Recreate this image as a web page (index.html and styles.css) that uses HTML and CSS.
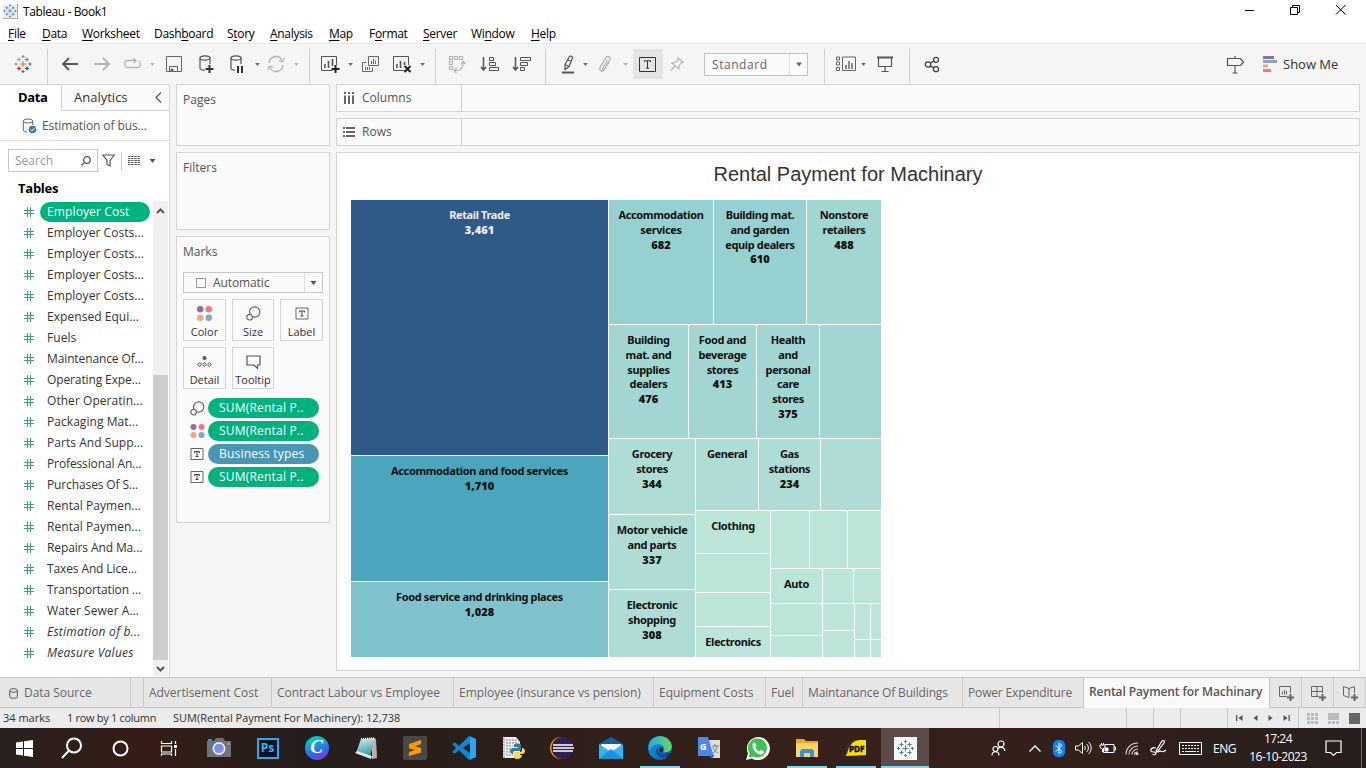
FILE: index.html
```html
<!DOCTYPE html>
<html lang="en">
<head>
<meta charset="utf-8">
<title>Tableau - Book1</title>
<link rel="stylesheet" href="styles.css">
</head>
<body>
<svg class="defs" aria-hidden="true">
  <symbol id="caret" viewBox="0 0 6 4"><path d="M0 0h6L3 4z" fill="currentColor"/></symbol>
  <symbol id="hash" viewBox="0 0 12 12"><path d="M4.5 1v10M7.5 1v10M1 4.5h10M1 7.5h10" fill="none" stroke="#3fa37d" stroke-width="1.1"/></symbol>
  <symbol id="label" viewBox="0 0 14 12"><path d="M1 .5h12v11H1z" fill="none" stroke="#666"/><path d="M4.5 5V3.500h5V5M7 3.500v5M5.500 8.500h3" fill="none" stroke="#444"/></symbol>
  <symbol id="size" viewBox="0 0 15 15"><circle cx="8.700" cy="6" r="5.200" fill="none" stroke="#666" stroke-width="1.200"/><circle cx="3.600" cy="11.200" r="2.800" fill="#fafafa" stroke="#666" stroke-width="1.200"/></symbol>
  <symbol id="dots" viewBox="0 0 14 14"><circle cx="3" cy="3" r="3" fill="#8a739b"/><circle cx="11" cy="3" r="3" fill="#fb7380"/><circle cx="3" cy="11" r="3" fill="#f2a679"/><circle cx="11" cy="11" r="3" fill="#83a5cb"/></symbol>
  <symbol id="tableau" viewBox="0 0 18 18"><path d="M9 6v6M6 9h6M5 3v4M3 5h4M13 3v4M11 5h4M5 11v4M3 13h4M13 11v4M11 13h4M9 .5v3M7.500 2h3M9 14.500v3M7.500 16h3M2 7.500v3M.5 9h3M16 7.500v3M14.500 9h3" fill="none" stroke="#3f83b0"/></symbol>
</svg>

<header class="titlebar">
  <span class="app-icon"><svg width="14" height="14"><use href="#tableau"/></svg></span>
  <span class="app-title">Tableau - Book1</span>
  <span class="window-buttons">
    <svg width="12" height="12"><path d="M2 6.500h9" stroke="#000"/></svg>
    <svg width="12" height="12"><path d="M1.500 3.500h7v7h-7zM3.500 3.500v-2h7v7h-2" fill="none" stroke="#000"/></svg>
    <svg width="12" height="12"><path d="M1 1l9.500 9.500M10.500 1L1 10.500" stroke="#000"/></svg>
  </span>
</header>
<nav class="menu">
  <span><u>F</u>ile</span><span><u>D</u>ata</span><span><u>W</u>orksheet</span><span>Dash<u>b</u>oard</span><span>S<u>t</u>ory</span><span><u>A</u>nalysis</span><span><u>M</u>ap</span><span>F<u>o</u>rmat</span><span><u>S</u>erver</span><span>Wi<u>n</u>dow</span><span><u>H</u>elp</span>
</nav>

<div class="toolbar">
  <svg width="18" height="18" viewBox="0 0 18 18" fill="none" stroke-width="1.200"><path d="M9 6v6M6 9h6" stroke="#e8762c"/><path d="M5 2.500v4M3 4.500h4" stroke="#eb912c"/><path d="M13 2.500v4M11 4.500h4" stroke="#59879b"/><path d="M5 11.500v4M3 13.500h4" stroke="#c72035"/><path d="M13 11.500v4M11 13.500h4" stroke="#1f447e"/><path d="M9 0v3M7.500 1.500h3M2 7.500v3M.5 9h3" stroke="#7099a6"/><path d="M9 15v3M7.500 16.500h3M16 7.500v3M14.500 9h3" stroke="#5c6692"/></svg>
  <i class="sep"></i>
  <svg width="18" height="14" fill="none" stroke="#555" stroke-width="1.800"><path d="M17 7H2M8 1L2 7l6 6"/></svg>
  <svg width="18" height="14" fill="none" stroke="#b4b4b4" stroke-width="1.800"><path d="M1 7h15M10 1l6 6-6 6"/></svg>
  <svg width="19" height="12" fill="none" stroke="#b4b4b4" stroke-width="1.300"><path d="M7 2.500H5a3.500 3.500 0 000 7h9a3.500 3.500 0 003.500-3.500c0-1.500-1-2.700-2-3M6 2.500h7M10.500 0L13 2.500 10.500 5"/></svg>
  <svg class="dim" width="5" height="3"><use href="#caret"/></svg>
  <svg width="16" height="16" fill="none" stroke="#666"><path d="M.5.5h15v15H.5zM3.500 15.500v-5h8v5M5.500 13v2.500"/><path d="M5 13h2v2.500H5z" fill="#666"/></svg>
  <svg width="16" height="18" fill="none" stroke="#555" stroke-width="1.200"><ellipse cx="7" cy="3" rx="5" ry="2.200"/><path d="M2 3v10c0 1.300 2 2.200 5 2.200M12 3v6"/><path d="M11.500 10v8M7.500 14h8" stroke="#333" stroke-width="2"/></svg>
  <svg width="16" height="18" fill="none" stroke="#555" stroke-width="1.200"><ellipse cx="7" cy="3" rx="5" ry="2.200"/><path d="M2 3v10c0 1.300 2 2.200 4 2.200M12 3v6"/><path d="M9 11v7M13 11v7" stroke="#333" stroke-width="2"/></svg>
  <svg width="5" height="3"><use href="#caret"/></svg>
  <svg width="18" height="18" fill="none" stroke="#b4b4b4" stroke-width="1.300"><path d="M2 8a7 7 0 0113-3M16 10a7 7 0 01-13 3M12 6l3.500.5L17.500 3M6 12l-3.500-.5L.5 15"/></svg>
  <svg class="dim" width="5" height="3"><use href="#caret"/></svg>
  <i class="sep"></i>
  <svg width="20" height="18" fill="none" stroke="#555"><path d="M16.500 10V1.500H1.500v14h11"/><path d="M5 9v4M8.500 6v7M12.500 4v7" stroke-width="1.600"/><path d="M15.500 10v8M11.500 14h8" stroke="#222" stroke-width="2"/></svg>
  <svg width="5" height="3"><use href="#caret"/></svg>
  <svg width="18" height="17" fill="none" stroke="#666"><path d="M6.500.5h10v9h-10zM4.500 6.500h-4v9h10v-4M9.500 5v3M11.500 3v5M13.500 4.500v3.500M3.500 11v3M5.500 11v3M7.500 11v3"/></svg>
  <svg width="20" height="18" fill="none" stroke="#555"><path d="M16.500 10V1.500H1.500v14h11"/><path d="M5 9v4M8.500 6v7M12.500 7v3" stroke-width="1.600"/><path d="M12.500 11l6 6M18.500 11l-6 6" stroke="#222" stroke-width="2"/></svg>
  <svg width="5" height="3"><use href="#caret"/></svg>
  <i class="sep"></i>
  <svg width="18" height="18" fill="none" stroke="#b4b4b4"><path d="M1.500 1.500h3v3h-3zM6.500 1.500h3v3h-3zM11.500 1.500h3v3h-3zM1.500 6.500h3v3h-3zM1.500 11.500h3v3h-3zM6 15.500h3c4 0 6-3 6-8M13 9l2.300-2.500L17.500 9M8.500 13L6 15.500l2.500 2.500" stroke-width="1.200"/></svg>
  <svg width="20" height="16" fill="none" stroke="#555"><path d="M3.500 1v12M1 11l2.500 3L6 11" stroke-width="1.500"/><path d="M9.500 1.500h4v3h-4zM9.500 6.500h6v3h-6zM9.500 11.500h9v3h-9z"/></svg>
  <svg width="20" height="16" fill="none" stroke="#555"><path d="M3.500 1v12M1 11l2.500 3L6 11" stroke-width="1.500"/><path d="M8.500 1.500h10v3h-10zM8.500 6.500h7v3h-7zM8.500 11.500h4v3h-4z"/></svg>
  <i class="sep"></i>
  <svg width="14" height="19" fill="none" stroke="#555"><path d="M8.500 1.500c.5-1 3.500.2 3 1.500L8 11.500l-4 3v-5zM4 9.500l4 2M7 5l3.500 1.500M4 12v2.500" stroke-width="1.200"/><path d="M1 17.500h12" stroke-width="2"/></svg>
  <svg width="5" height="3"><use href="#caret"/></svg>
  <svg width="14" height="18" fill="none" stroke="#aaa" stroke-width="1.200"><path d="M9.500 5l-4.500 8c-.6 1.500 1 2 1.700 1l5-9c1.500-3-2-5-4-2l-5.500 9c-1.500 3 1 5 3.500 3.500l5-8"/></svg>
  <svg class="dim" width="5" height="3"><use href="#caret"/></svg>
  <span class="tool-on"><svg width="17" height="15" fill="none" stroke="#333"><path d="M.5.5h16v14H.5z"/><path d="M5.500 5V3.800h6V5M8.500 4v7M7 11.200h3"/></svg></span>
  <svg width="14" height="16" fill="none" stroke="#b4b4b4" stroke-width="1.200"><path d="M8 2l5 4.500-2 .5-2 3-.2 3L2 7l3.300-.6L8 4zM5 10L1 14.500"/></svg>
  <span class="fit-select"><span>Standard</span><b><svg width="6" height="5"><use href="#caret"/></svg></b></span>
  <i class="sep"></i>
  <svg width="20" height="16" fill="none" stroke="#666"><path d="M.5 1h3v3h-3zM.5 6h3v3h-3zM.5 11.500h3v3h-3zM6.500 1h13v13.500h-13z"/><path d="M10 9v4M13 5v8M16 7v6" stroke-width="1.500"/></svg>
  <svg width="5" height="3"><use href="#caret"/></svg>
  <svg width="18" height="18" fill="none" stroke="#555"><path d="M1 2.500h16" stroke-width="2"/><path d="M2.500 3v8.500h13V3M9 11.500v5M5.500 16.500h7" stroke-width="1.200"/></svg>
  <i class="sep"></i>
  <svg width="16" height="17" fill="none" stroke="#444" stroke-width="1.300"><circle cx="4" cy="8.500" r="2.700"/><circle cx="12" cy="3.800" r="2.500"/><circle cx="12" cy="13.200" r="2.500"/><path d="M6.300 7.100l3.500-2M6.300 9.900l3.500 2"/></svg>
  <i></i>
  <svg width="19" height="19" fill="none" stroke="#555" stroke-width="1.200"><path d="M1.500 3.500h13l3 3.500-3 3.500h-13zM9 1v2.500M9 10.500V18M6.500 18h5"/></svg>
  <span class="show-me"><svg width="14" height="16"><path d="M0 0h11v3H0z" fill="#8a739b"/><path d="M0 4h14v3H0z" fill="#83a5cb"/><path d="M0 8.500h5v3H0z" fill="#f2a679"/><path d="M0 13h8v3H0z" fill="#fb7380"/></svg><span>Show Me</span></span>
</div>

<main class="workspace">
  <aside class="data-pane">
    <div class="pane-tabs"><b>Data</b><span>Analytics<svg width="7" height="11" fill="none" stroke="#555" stroke-width="1.200"><path d="M6 .5l-5 5 5 5"/></svg></span></div>
    <div class="source">
      <svg width="15" height="16" fill="none" stroke="#666"><ellipse cx="6" cy="3" rx="4.700" ry="2"/><path d="M1.300 3v9c0 1.200 1.500 2 4 2M10.700 3v4"/><circle cx="10.500" cy="11.500" r="3.800" fill="#3a7ea5" stroke="none"/><path d="M8.500 11.500l1.500 1.500 2.500-3" stroke="#fff"/></svg>
      <span>Estimation of bus...</span>
    </div>
    <div class="search-row">
      <span class="search">Search<svg width="10" height="10" fill="none" stroke="#555" stroke-width="1.200"><circle cx="6" cy="4" r="3.300"/><path d="M3.600 6.400L.5 9.500"/></svg></span>
      <svg width="13" height="13" fill="none" stroke="#555" stroke-width="1.200"><path d="M.8 1h11.500L8 6.500V12L5 10.500v-4z"/></svg>
      <i></i>
      <svg class="view-icon" width="12" height="9" stroke="#555"><path d="M0 .5h12M0 2.500h12M0 4.500h12M0 6.500h12M0 8.500h12" stroke-dasharray="2.400 .8"/></svg>
      <svg class="menu-caret" width="7" height="4"><use href="#caret"/></svg>
    </div>
    <h2>Tables</h2>
    <div class="field-area">
      <ul class="fields">
        <li><svg><use href="#hash"/></svg><span class="chosen">Employer Cost</span></li>
        <li><svg><use href="#hash"/></svg><span>Employer Costs...</span></li>
        <li><svg><use href="#hash"/></svg><span>Employer Costs...</span></li>
        <li><svg><use href="#hash"/></svg><span>Employer Costs...</span></li>
        <li><svg><use href="#hash"/></svg><span>Employer Costs...</span></li>
        <li><svg><use href="#hash"/></svg><span>Expensed Equi...</span></li>
        <li><svg><use href="#hash"/></svg><span>Fuels</span></li>
        <li><svg><use href="#hash"/></svg><span class="tight">Maintenance Of...</span></li>
        <li><svg><use href="#hash"/></svg><span class="tight">Operating Expe...</span></li>
        <li><svg><use href="#hash"/></svg><span>Other Operatin...</span></li>
        <li><svg><use href="#hash"/></svg><span>Packaging Mat...</span></li>
        <li><svg><use href="#hash"/></svg><span>Parts And Supp...</span></li>
        <li><svg><use href="#hash"/></svg><span class="tight">Professional An...</span></li>
        <li><svg><use href="#hash"/></svg><span class="tight">Purchases Of S...</span></li>
        <li><svg><use href="#hash"/></svg><span>Rental Paymen...</span></li>
        <li><svg><use href="#hash"/></svg><span>Rental Paymen...</span></li>
        <li><svg><use href="#hash"/></svg><span class="tight">Repairs And Ma...</span></li>
        <li><svg><use href="#hash"/></svg><span class="tight">Taxes And Lice...</span></li>
        <li><svg><use href="#hash"/></svg><span class="tight">Transportation ...</span></li>
        <li><svg><use href="#hash"/></svg><span>Water Sewer A...</span></li>
        <li><svg><use href="#hash"/></svg><em>Estimation of b...</em></li>
        <li><svg><use href="#hash"/></svg><em>Measure Values</em></li>
      </ul>
      <div class="scrollbar">
        <svg width="9" height="6" fill="none" stroke="#555" stroke-width="2"><path d="M1 5l3.500-3.500L8 5"/></svg>
        <i></i>
        <svg width="9" height="6" fill="none" stroke="#555" stroke-width="2"><path d="M1 1l3.500 3.500L8 1"/></svg>
      </div>
    </div>
  </aside>

  <section class="cards">
    <div class="card pages">Pages</div>
    <div class="card filters">Filters</div>
    <div class="card marks">Marks
      <div class="mark-type"><i></i><span>Automatic</span><b><svg width="7" height="4"><use href="#caret"/></svg></b></div>
      <div class="mark-buttons">
        <div><svg width="15" height="15"><use href="#dots"/></svg>Color</div>
        <div><svg width="15" height="15"><use href="#size"/></svg>Size</div>
        <div><svg width="14" height="15"><use href="#label"/></svg>Label</div>
        <div><svg width="15" height="15" fill="none" stroke="#555"><circle cx="7.500" cy="4" r="2" fill="#555" stroke="none"/><circle cx="2.500" cy="10.500" r="1.600"/><circle cx="7.500" cy="10.500" r="1.600"/><circle cx="12.500" cy="10.500" r="1.600"/></svg>Detail</div>
        <div><svg width="15" height="15" fill="none" stroke="#555" stroke-width="1.200"><path d="M1 2h13v9h-2.500v3.500L8 11H1z"/></svg>Tooltip</div>
      </div>
      <div class="shelf-pill"><svg width="15" height="15"><use href="#size"/></svg><span>SUM(Rental P..</span></div>
      <div class="shelf-pill"><svg width="15" height="14"><use href="#dots"/></svg><span>SUM(Rental P..</span></div>
      <div class="shelf-pill dimension"><svg width="14" height="12"><use href="#label"/></svg><span>Business types</span></div>
      <div class="shelf-pill"><svg width="14" height="12"><use href="#label"/></svg><span>SUM(Rental P..</span></div>
    </div>
  </section>

  <section class="sheet">
    <div class="shelf"><span><svg width="12" height="12" stroke="#666" stroke-width="2"><path d="M2 0v2M6 0v2M10 0v2M2 3.500V12M6 3.500V12M10 3.500V12"/></svg>Columns</span></div>
    <div class="shelf"><span><svg width="12" height="12" stroke="#666" stroke-width="2"><path d="M0 2h2M0 6h2M0 10h2M3 2h9M3 6h9M3 10h9"/></svg>Rows</span></div>
    <div class="view">
      <h1>Rental Payment for Machinary</h1>
      <div class="treemap">
        <div class="col w257">
          <div class="cell navy h255">Retail Trade<br><b>3,461</b></div>
          <div class="cell blue h125">Accommodation and food services<br><b>1,710</b></div>
          <div class="cell sky h75">Food service and drinking places<br><b>1,028</b></div>
        </div>
        <div class="col w272">
          <div class="row h124">
            <div class="cell aqua w104">Accommodation<br>services<br><b>682</b></div>
            <div class="cell aqua w92">Building mat.<br>and garden<br>equip dealers<br><b>610</b></div>
            <div class="cell teal w74">Nonstore<br>retailers<br><b>488</b></div>
          </div>
          <div class="row h113">
            <div class="cell teal w79">Building<br>mat. and<br>supplies<br>dealers<br><b>476</b></div>
            <div class="cell teal w67">Food and<br>beverage<br>stores<br><b>413</b></div>
            <div class="cell teal w62">Health<br>and<br>personal<br>care<br>stores<br><b>375</b></div>
            <div class="cell teal w61"></div>
          </div>
          <div class="row h218">
            <div class="col w86">
              <div class="cell mint h75">Grocery<br>stores<br><b>344</b></div>
              <div class="cell mint h74">Motor vehicle<br>and parts<br><b>337</b></div>
              <div class="cell mint h67">Electronic<br>shopping<br><b>308</b></div>
            </div>
            <div class="col w185">
              <div class="row h71">
                <div class="cell mint w62">General</div>
                <div class="cell mint w61">Gas<br>stations<br><b>234</b></div>
                <div class="cell mint w60"></div>
              </div>
              <div class="row h146">
                <div class="col w74">
                  <div class="cell pale h42">Clothing</div>
                  <div class="cell pale h38"></div>
                  <div class="cell pale h33"></div>
                  <div class="cell pale h30">Electronics</div>
                </div>
                <div class="col w110">
                  <div class="row h57">
                    <div class="cell pale w38"></div><div class="cell pale w37"></div><div class="cell pale w33"></div>
                  </div>
                  <div class="row h88">
                    <div class="col w51">
                      <div class="cell pale h34">Auto</div><div class="cell pale h31"></div><div class="cell pale h21"></div>
                    </div>
                    <div class="col w58">
                      <div class="row h34"><div class="cell pale w30"></div><div class="cell pale w27"></div></div>
                      <div class="row h53">
                        <div class="col w31"><div class="cell pale h26"></div><div class="cell pale h26"></div></div>
                        <div class="col w26">
                          <div class="row h35"><div class="cell pale w15"></div><div class="cell pale w10"></div></div>
                          <div class="row h17"><div class="cell pale w15"></div><div class="cell pale w10"></div></div>
                        </div>
                      </div>
                    </div>
                  </div>
                </div>
              </div>
            </div>
          </div>
        </div>
      </div>
    </div>
  </section>
</main>

<div class="sheet-tabs">
  <span class="data-source"><svg width="9" height="11" fill="none" stroke="#555"><ellipse cx="4.500" cy="2.500" rx="3.800" ry="1.800"/><path d="M.7 2.500v6.300c0 2 7.600 2 7.600 0V2.500"/></svg>Data Source</span>
  <span></span>
  <span>Advertisement Cost</span>
  <span>Contract Labour vs Employee</span>
  <span>Employee (insurance vs pension)</span>
  <span>Equipment Costs</span>
  <span>Fuel</span>
  <span class="snug">Maintanance Of Buildings</span>
  <span class="snug">Power Expenditure</span>
  <span class="active">Rental Payment for Machinary</span>
  <span class="new"><svg width="16" height="16" fill="none" stroke="#666"><path d="M12.500 8V1.500H1.500v10H9M4.500 6.500v3M6.500 5v4.500M8.500 6v3.500"/><path d="M12.500 9v7M9 12.500h7" stroke-width="2"/></svg></span>
  <span class="new"><svg width="16" height="16" fill="none" stroke="#666"><path d="M12.500 8V1.500H1.500v10H9M7 1.500v10M1.500 6.500h11"/><path d="M12.500 9v7M9 12.500h7" stroke-width="2"/></svg></span>
  <span class="new"><svg width="16" height="16" fill="none" stroke="#666"><path d="M12.500 8V1.500L7 3.500l-5.500-2v9L7 12.500V3.500"/><path d="M12.500 9v7M9 12.500h7" stroke-width="2"/></svg></span>
</div>

<div class="status">
  <span>34 marks</span><span class="snug">1 row by 1 column</span><span>SUM(Rental Payment For Machinery): 12,738</span>
  <i></i><i></i><i></i><i></i>
  <div class="pager">
    <svg width="7" height="8" fill="#555"><path d="M0 1h1.300v6H0zM6.500 1v6L2.500 4z"/></svg>
    <svg width="7" height="8" fill="#555"><path d="M5.500 1v6l-4-3z"/></svg>
    <svg width="7" height="8" fill="#555"><path d="M1.500 1v6l4-3z"/></svg>
    <svg width="7" height="8" fill="#555"><path d="M.5 1v6l4-3zM5.500 1h1.300v6H5.500z"/></svg>
  </div>
  <div class="views">
    <svg width="11" height="11" fill="#bbb"><path d="M0 0h3v3H0zM4 0h3v3H4zM8 0h3v3H8zM0 4h3v3H0zM4 4h3v3H4zM8 4h3v3H8zM0 8h3v3H0zM4 8h3v3H4zM8 8h3v3H8z"/></svg>
    <svg width="11" height="11" fill="#bbb"><path d="M0 0h11v7H0zM0 8h3v3H0zM4 8h3v3H4zM8 8h3v3H8z"/></svg>
    <svg width="11" height="11" fill="#666"><path d="M0 0h11v11H0z"/></svg>
  </div>
</div>

<footer class="taskbar">
  <span><svg width="17" height="17" fill="#fff"><path d="M0 2.500l7-1v6.500H0zM8 1.300L17 0v8H8zM0 9h7v6.500l-7-1zM8 9h9v8l-9-1.300z"/></svg></span>
  <span><svg width="22" height="22" fill="none" stroke="#fff" stroke-width="2"><circle cx="13" cy="8.500" r="7"/><path d="M8 13.500L1 21"/></svg></span>
  <span><svg width="17" height="17" fill="none" stroke="#fff" stroke-width="2"><circle cx="8.500" cy="8.500" r="7"/></svg></span>
  <span><svg width="18" height="17" fill="none" stroke="#fff" stroke-width="1.200"><path d="M1.500 1v2.500h10V1M1.500 6h10v6h-10zM1.500 16v-2h10v2M15.500 1v3M15.500 9v7"/><path d="M14 5h3v3h-3z" fill="#fff" stroke="none"/></svg></span>
  <span><svg width="24" height="20"><path d="M1 1h4v3H1z" fill="#1a9be0"/><path d="M7 3l2-3h7l2 3h6v16H0V3z" fill="#6b747b"/><circle cx="12" cy="10.500" r="6.500" fill="#e9edf2"/><circle cx="12" cy="10.500" r="4.800" fill="url(#lens)"/><circle cx="21.500" cy="6" r="1" fill="#b7bdc2"/><defs><linearGradient id="lens" x2="1" y2="1"><stop stop-color="#46a0f5"/><stop offset="1" stop-color="#c279dd"/></linearGradient></defs></svg></span>
  <span><i class="ps">Ps</i></span>
  <span><i class="canva">C</i></span>
  <span><svg width="24" height="24"><defs><linearGradient id="page" x2=".3" y2="1"><stop stop-color="#d9f3f4"/><stop offset="1" stop-color="#3d93a4"/></linearGradient></defs><path d="M18 2l4 1 1 19-5 1z" fill="#b9b3a4"/><path d="M7 3l14-1-5 19-14-4z" fill="url(#page)"/><path d="M7 3l14-.8" stroke="#eef" stroke-width="2" stroke-dasharray="1 1"/><path d="M1 17l2-2 15 5-1 3z" fill="#dce9ea"/></svg></span>
  <span><svg width="24" height="24"><rect width="24" height="24" rx="2" fill="#484848"/><path d="M6 8l12-4v4l-6 2.300 6 1.700v4.500L6 20v-4l6-2-6-1.800z" fill="#ff9800"/></svg></span>
  <span><svg width="24" height="24"><path d="M17 0l7 3v18l-7 3L7 14l-4 3.500L0 16l4-4-4-4 3-1.500L7 10zM18 7l-7 5 7 5z" fill="#1684cd" fill-rule="evenodd"/><path d="M18 .5l6 2.500v18l-6 2.500z" fill="#29a6f2"/></svg></span>
  <span><svg width="24" height="24"><path d="M2 1h13l4 5v16H2z" fill="#eee"/><path d="M3 2v20M5 4h11M5 7h11M5 10h7M5 13h5M5 16h4M5 19h7" stroke="#888" stroke-dasharray="2 1"/><path d="M13 9c0-2 7-2 7 0v4c0 2-1 2-3 2h-3c-2 0-2 1-2 3-4 0-4-6 0-6h5v-1h-4z" fill="#3776ab"/><path d="M21 12c4 0 4 6 0 6h-4v1h4c0 5-8 5-8 2v-3c0-2 1-2 3-2h3c2 0 2-2 2-4z" fill="#ffd847"/></svg></span>
  <span><svg width="24" height="24"><circle cx="11" cy="12" r="11" fill="#f7941e"/><circle cx="12.500" cy="12" r="11" fill="#33201c"/><circle cx="13.500" cy="12" r="10.300" fill="#302055"/><path d="M3 9h20M3 12h21M3 15h20" stroke="#fff" stroke-width="1.500"/></svg></span>
  <span><svg width="24" height="24"><path d="M0 8l12-7 12 7v14H0z" fill="#0d5faa"/><path d="M2 8h20v8H2z" fill="#f5f5f5"/><path d="M0 8l12 8L24 8v15H0z" fill="#31b5ee"/><path d="M0 23l12-10 12 10z" fill="#1994dc"/></svg></span>
  <span class="running"><svg width="24" height="24"><defs><linearGradient id="edge" x2="1" y2="1"><stop stop-color="#1aa1e2"/><stop offset="1" stop-color="#0c56ab"/></linearGradient><linearGradient id="wave"><stop stop-color="#2aa8e8"/><stop offset="1" stop-color="#66da5b"/></linearGradient></defs><circle cx="12" cy="12" r="12" fill="url(#edge)"/><path d="M17 17c3 1 5 0 7-1l1 6-6 2z" fill="#33201a"/><path d="M1 8C4-1 18-3 23 7c3 8-4 10-8 9 3-2 1-8-5-8-4 0-7 3-9 7z" fill="url(#wave)"/><path d="M10 10c-2 4 2 10 11 8l-2 3c-8 3-14-5-9-11z" fill="#0a4f9b"/><path d="M11 13c1-2 3-2 4 0 0 1-1 2 0 3-2 1-4 0-4-3z" fill="#2b1e1a"/></svg></span>
  <span><svg width="24" height="24"><path d="M9 4h14v18H14z" fill="#ddd"/><path d="M1 1h10l6 20-5-1H1z" fill="#4d87ee"/><path d="M12 20l5-1-2 4z" fill="#3056b8"/><path d="M15 10h7M18 8v2M16 17c3-2 4-4 4-7M16 11c1 3 3 5 5 6" stroke="#688" fill="none"/><text x="3" y="14" class="g-letter">G</text></svg></span>
  <span><svg width="25" height="25"><path d="M1 24l2-6.500A11.500 11.500 0 1112.500 24c-2 0-4-.5-5.500-1.500z" fill="#fff"/><path d="M3.500 21.500l1.200-4a9.500 9.500 0 113.500 3z" fill="#3cc250"/><path d="M8 7l2-.5 1.500 3.500-1.200 1.500c1 2 2.200 3 4 4l1.500-1.700 3 1.700c.5 2-2 3-3.500 3C11 18 6 12 8 7z" fill="#fff"/></svg></span>
  <span class="running"><svg width="22" height="19"><path d="M0 0h8l2 2h12v15H0z" fill="#e8a621"/><path d="M0 4h22v14H0z" fill="#ffd567"/><path d="M4 18v-6l2-2h10l2 2v6h-4v-4H8v4z" fill="#3695d8"/></svg></span>
  <span class="running"><svg width="22" height="18"><path d="M1 17L4 5c2-4 9-4 17-4v15z" fill="#fadf07"/><path d="M1 15C1 5 4 1 14 1 7 2 4 7 2 15z" fill="#333"/><text x="4" y="13" class="pdf-letters">PDF</text></svg></span>
  <span class="running focused"><svg width="23" height="23"><path d="M0 0h23v23H0z" fill="#f8f8f8"/><use href="#tableau" x="2.500" y="2.500" width="18" height="18"/></svg></span>
  <i></i>
  <span><svg width="15" height="16" fill="none" stroke="#fff" stroke-width="1.200"><circle cx="10" cy="4" r="3"/><circle cx="4.500" cy="9" r="2.500"/><path d="M6.500 8.500c3-2 7-1.500 7.500 2.500M1 15.500c0-5 7-5 7 0"/></svg></span>
  <span><svg width="12" height="7" fill="none" stroke="#fff" stroke-width="1.300"><path d="M.5 6.500L6 1l5.500 5.500"/></svg></span>
  <span><svg width="12" height="17"><rect width="12" height="17" rx="5" fill="#0a84f5"/><path d="M3 5.500l6 6-3 2.500V3l3 2.500-6 6" fill="none" stroke="#fff"/></svg></span>
  <span><svg width="17" height="14" fill="none" stroke="#fff"><path d="M.5 5h3l4-3.500v11L3.500 9h-3zM9.500 5c1 1 1 3 0 4M11.500 3c2.500 2 2.500 6 0 8M13.500 1c3.500 3 3.500 9 0 12"/></svg></span>
  <span><svg width="17" height="12" fill="none" stroke="#fff"><path d="M6 2.500h9v8H4.500V7M15 5h1.500v3H15M1 3h5v2.500L3.500 7 1 5.500zM2.500 1v2M4.500 1v2M3.500 7v3"/><path d="M6 6h3v3H6z" fill="#fff"/></svg></span>
  <span><svg width="14" height="13" fill="none" stroke="#ddd" stroke-width="1.100"><path d="M1 12.500C1 6 6 1 13 1M4 12.500C4 8 8 4 13 4M7 12.500c0-3 3-5.500 6-5.500M9.500 12.500c0-1.500 1.500-2.500 3.500-2.500"/><circle cx="12" cy="12" r="1" fill="#fff"/></svg></span>
  <span><svg width="17" height="16" fill="none" stroke="#fff" stroke-width="1.200"><path d="M6 11L12 1c2-1 3 0 2 2l-7 9zM6 8c-3-1-6 1-5 3s5 0 5 2-3 2-3 1M8 12c3-3 4 2 8-2"/></svg></span>
  <span><svg width="23" height="13" fill="none" stroke="#fff"><path d="M.5.5h22v12H.5z"/><path d="M3 3.500h17M3 6.500h17" stroke-dasharray="2 1"/><path d="M3 9.500h2M6 9.500h11M18 9.500h2"/></svg></span>
  <span class="lang">ENG</span>
  <span class="clock">17:24<br>16-10-2023</span>
  <span><svg width="17" height="17" fill="none" stroke="#fff" stroke-width="1.200"><path d="M1 1h15v11.500h-4.500L8.500 15.500l-3-3H1z"/></svg></span>
  <i class="peek"></i>
</footer>
</body>
</html>
```
FILE: styles.css
```css
* { box-sizing: border-box; }
body {
  margin: 0; width: 1366px; height: 768px; overflow: hidden;
  display: flex; flex-direction: column;
  background: #f5f5f5; color: #333;
  font: 12px "Open Sans", "Noto Sans", sans-serif;
}
svg { display: block; flex: none; }
.defs { width: 0; height: 0; flex: 0 0 0; }
h1, h2, ul { margin: 0; padding: 0; font-weight: normal; }
i { font-style: normal; }
span { white-space: nowrap; }

/* window chrome */
.titlebar { height: 23px; background: #fff; display: flex; align-items: center; padding-left: 3px; color: #000; }
.app-icon { width: 15px; height: 15px; background: #eee; border-right: 1px solid #aaa; border-bottom: 1px solid #aaa; }
.app-title { margin-left: 5px; font-size: 12px; letter-spacing: -.38px; }
.window-buttons { margin-left: auto; display: flex; gap: 34px; padding-right: 19px; align-self: flex-start; padding-top: 4px; }
.menu {
  height: 20px; background: #fff; color: #000; padding-left: 8px;
  display: grid; grid-template-columns: 34px 40px 72px 73px 43px 59px 40px 54px 48px 60px 40px;
  font-size: 12px; line-height: 21px; letter-spacing: -.3px;
}
.menu u { text-underline-offset: 2px; }

.toolbar {
  height: 41px; padding-left: 8px; border-top: 1px solid #e9e9e9; background: #f5f5f5; color: #666;
  display: grid; align-items: center; justify-items: center;
  grid-template-columns: 30px 18px 28px 36px 24px 16px 28px 36px 26px 14px 24px 16px 10px 32px 8px 34px 28px 12px 14px 30px 36px 28px 18px 28px 7px 32px 8px 37px 22px 129px 14px 30px 5px 38px 10px 36px 1fr 30px 116px;
}
.sep { width: 1px; height: 35px; background: #d0d0d0; align-self: end; }
.dim { color: #b4b4b4; }
.tool-on { width: 30px; height: 30px; background: #e4e4e4; display: grid; place-items: center; }
.fit-select {
  width: 104px; height: 23px; border: 1px solid #c3c3c3; background: #fafafa; justify-self: end; margin-right: 9px;
  display: flex; align-items: center; justify-content: space-between; padding-left: 7px; font-size: 12px; letter-spacing: .55px;
}
.fit-select b, .mark-type b { width: 18px; height: 100%; border-left: 1px solid #ddd; display: grid; place-items: center; }
.show-me { display: flex; align-items: center; gap: 6px; justify-self: start; margin-left: 13px; font-size: 13px; color: #333; }

/* workspace */
.workspace { height: 593px; display: flex; }
.data-pane { width: 170px; background: #fff; border-top: 1px solid #d4d4d4; border-right: 1px solid #d4d4d4; }
.pane-tabs { height: 26px; display: flex; font-size: 13px; line-height: 25px; }
.pane-tabs b { width: 61px; padding-left: 18px; color: #000; letter-spacing: -.4px; }
.pane-tabs span { flex: 1; padding: 0 7px 0 12px; background: #fafafa; border-left: 1px solid #d4d4d4; border-bottom: 1px solid #d4d4d4; display: flex; align-items: center; justify-content: space-between; }
.source { height: 30px; border-bottom: 1px solid #e0e0e0; display: flex; align-items: center; gap: 5px; padding-left: 22px; color: #555; letter-spacing: -.1px; }
.search-row { margin-top: 8px; height: 23px; padding-left: 8px; display: flex; align-items: center; }
.search { width: 90px; height: 23px; margin-right: 4px; border: 1px solid #c8c8c8; padding: 0 6px; display: flex; align-items: center; justify-content: space-between; color: #999; }
.search-row i { width: 1px; height: 18px; background: #ccc; margin-left: 6px; }
.view-icon { margin: 0 9px 0 6px; }
.menu-caret { color: #555; }
h2 { height: 29px; padding-left: 18px; font-size: 13px; line-height: 32px; font-weight: bold; letter-spacing: -.25px; color: #000; }
.field-area { height: 475px; display: flex; justify-content: space-between; }
.fields { list-style: none; padding-left: 23px; flex: 1; }
.fields li { height: 21px; display: flex; align-items: center; }
.fields svg { width: 12px; height: 12px; margin-right: 5px; }
.fields span, .fields em { height: 20px; line-height: 20px; padding-left: 7px; letter-spacing: .05px; white-space: nowrap; }
.fields em { letter-spacing: .25px; }
.fields .tight { letter-spacing: -.12px; }
.fields .chosen { width: 110px; background: #00b180; color: #fff; border-radius: 10px; letter-spacing: .12px; }
.scrollbar { width: 15px; background: #f0f0f0; margin-right: 1px; display: flex; flex-direction: column; align-items: center; justify-content: space-between; padding: 7px 0 4px; }
.scrollbar i { width: 15px; height: 285px; background: #cdcdcd; margin: auto 0 6px; }

.cards { width: 166px; padding: 0 6px; display: flex; flex-direction: column; gap: 6px; }
.card { background: #fafafa; border: 1px solid #d4d4d4; padding: 7px 6px; line-height: 16px; color: #555; }
.pages { height: 62px; }
.filters { height: 78px; }
.marks { height: 287px; }
.mark-type { margin-top: 12px; height: 21px; border: 1px solid #c8c8c8; display: flex; align-items: center; letter-spacing: -.5px; }
.mark-type span { letter-spacing: -.1px; }
.mark-type i { width: 10px; height: 10px; border: 1px solid #999; margin: 0 7px 0 12px; }
.mark-type b { margin-left: auto; }
.mark-buttons { margin-top: 6px; display: grid; grid-template-columns: 43px 42px 43px; column-gap: 6px; row-gap: 6px; margin-bottom: 9px; }
.mark-buttons div { height: 42px; border: 1px solid #d4d4d4; display: flex; flex-direction: column; align-items: center; gap: 3px; padding-top: 6px; font-size: 11px; line-height: 16px; color: #333; white-space: nowrap; }
.shelf-pill { height: 20px; margin-bottom: 3px; display: grid; grid-template-columns: 14px 111px; column-gap: 4px; align-items: center; padding-left: 7px; }
.shelf-pill span { height: 20px; line-height: 20px; padding-left: 11px; border-radius: 10px; background: #00b180; color: #fff; letter-spacing: .2px; }
.shelf-pill.dimension span { background: #4996b2; }

.sheet { width: 1024px; display: flex; flex-direction: column; gap: 6px; }
.shelf { height: 28px; background: #fafafa; border: 1px solid #d4d4d4; color: #555; }
.shelf span { width: 125px; height: 26px; border-right: 1px solid #d4d4d4; display: flex; align-items: center; gap: 7px; padding: 0 0 1px 6px; }
.view { height: 519px; background: #fff; border: 1px solid #d4d4d4; padding-left: 14px; }
h1 { height: 47px; margin-left: -14px; font: 20px/43px "Liberation Sans", Arial, sans-serif; text-align: center; color: #333; }

/* treemap */
.treemap, .row { display: flex; gap: 1px; }
.treemap { height: 457px; }
.col { display: flex; flex-direction: column; gap: 1px; }
.cell { padding-top: 8px; overflow: hidden; text-align: center; font: bold 11px/14.75px "Noto Sans", "Open Sans", sans-serif; letter-spacing: -.37px; color: #111; white-space: nowrap; flex: none; }
.cell b { letter-spacing: .1px; }
.navy { background: #2d5a87; color: #eee; }
.blue { background: #4ba5bc; }
.sky { background: #80c2cb; }
.aqua { background: #97d0d0; }
.teal { background: #a2d6d2; }
.mint { background: #afdcd5; }
.pale { background: #bce5d9; }
.w257 { width: 257px; } .w272 { width: 272px; } .w104 { width: 104px; } .w92 { width: 92px; }
.w74 { width: 74px; } .w79 { width: 79px; } .w67 { width: 67px; } .w62 { width: 62px; }
.w61 { width: 61px; } .w60 { width: 60px; } .w86 { width: 86px; } .w185 { width: 185px; }
.w110 { width: 110px; } .w38 { width: 38px; } .w37 { width: 37px; } .w33 { width: 33px; }
.w51 { width: 51px; } .w58 { width: 58px; } .w30 { width: 30px; } .w27 { width: 27px; }
.w31 { width: 31px; } .w26 { width: 26px; } .w15 { width: 15px; } .w10 { width: 10px; }
.h255 { height: 255px; } .h125 { height: 125px; } .h75 { height: 75px; } .h124 { height: 124px; }
.h113 { height: 113px; } .h218 { height: 218px; } .h74 { height: 74px; } .h67 { height: 67px; }
.h71 { height: 71px; } .h146 { height: 146px; } .h42 { height: 42px; } .h38 { height: 38px; }
.h33 { height: 33px; } .h30 { height: 30px; } .h57 { height: 57px; } .h88 { height: 88px; }
.h34 { height: 34px; } .h31 { height: 31px; } .h21 { height: 21px; } .h53 { height: 53px; }
.h26 { height: 26px; } .h35 { height: 35px; } .h17 { height: 17px; }
.row > .cell { height: 100%; }

/* bottom bars */
.sheet-tabs {
  height: 31px; border-top: 1px solid #c8c8c8; border-bottom: 1px solid #c8c8c8; background: #e6e6e6; color: #666;
  display: grid; grid-template-columns: 131px 13px 128px 182px 200px 112px 37px 160px 121px 186px 32px 32px 32px;
  line-height: 30px; letter-spacing: -.03px;
}
.sheet-tabs span { border-right: 1px solid #c8c8c8; padding-left: 5px; }
.sheet-tabs .data-source { display: flex; align-items: center; gap: 6px; padding-left: 9px; }
.sheet-tabs .snug { letter-spacing: -.15px; }
.sheet-tabs .active { background: #fafafa; color: #555; font-weight: 600; line-height: 28px; letter-spacing: -.1px; }
.sheet-tabs .new { display: grid; place-items: center; padding: 0; }
.status {
  height: 20px; background: #ebebeb; color: #333; font-size: 11px; line-height: 20px; padding-left: 3px;
  display: grid; grid-template-columns: 64px 106px 826px 127px 27px 27px 47px 71px 1fr;
}
.status .snug { letter-spacing: -.3px; }
.status i { border-left: 1px solid #c8c8c8; }
.pager, .views { border-left: 1px solid #c8c8c8; display: flex; align-items: center; justify-content: space-between; padding: 0 8px; }
.views { padding: 0 6px 0 8px; }

.taskbar {
  height: 40px; color: #fff; background: linear-gradient(90deg, #28201e, #351d16 10%, #261d1b 22%, #2d1f1a 40%, #37221a 60%, #32201a 80%, #261e1d);
  display: grid; align-items: stretch;
  grid-template-columns: 48px 48px 48px 50px repeat(15, 49px) 45px 48px 26px 22px 26px 22px 28px 24px 40px 29px 78px 32px 1fr;
}
.taskbar > span { display: flex; align-items: center; justify-content: center; }
.taskbar > .running { box-shadow: inset 0 -2px #76d9f5; margin: 0 4px 0 5px; }
.taskbar > .focused { margin: 0 0 0 1px; background: #5c4b47; }
.ps { width: 22px; height: 21px; border: 2px solid #31a8e8; background: #0a1426; color: #31b4f5; font: bold 12px/16px "Open Sans", sans-serif; text-align: center; }
.canva { width: 24px; height: 24px; border-radius: 50%; background: linear-gradient(160deg, #00c4cc 20%, #2f6fe4 60%, #7d2ae8); font: italic bold 19px/22px "Liberation Serif", serif; text-align: center; }
.g-letter { font: bold 9px "Open Sans", sans-serif; fill: #fff; }
.pdf-letters { font: bold 8px "Open Sans", sans-serif; fill: #111; stroke: #111; stroke-width: .5px; }
.lang { font-size: 12px; letter-spacing: -.4px; }
.clock { text-align: center; font-size: 12px; line-height: 18px; letter-spacing: -.5px; }
.peek { border-left: 1px solid #77706d; margin-left: 12px; }
```
